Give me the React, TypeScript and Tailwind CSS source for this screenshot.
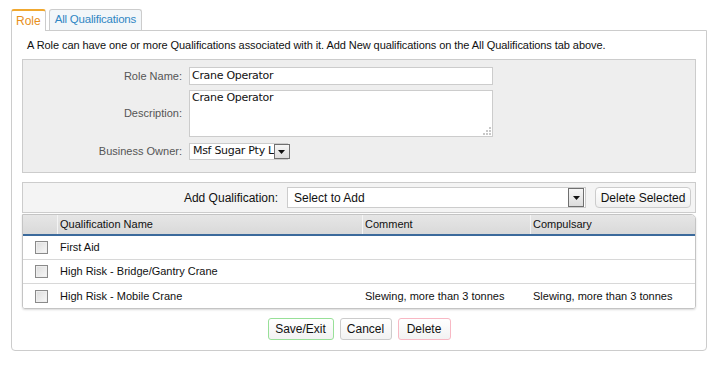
import { useState } from 'react'

const rows = [
  { name: 'First Aid', comment: '', compulsary: '' },
  { name: 'High Risk - Bridge/Gantry Crane', comment: '', compulsary: '' },
  {
    name: 'High Risk - Mobile Crane',
    comment: 'Slewing, more than 3 tonnes',
    compulsary: 'Slewing, more than 3 tonnes',
  },
]

function ArrowButton({ className = '' }: { className?: string }) {
  return (
    <span
      className={`flex items-center justify-center border border-[#6f6f6f] bg-gradient-to-b from-[#f6f6f6] to-[#dcdcdc] ${className}`}
    >
      <svg width="7" height="4" viewBox="0 0 7 4">
        <path d="M0 0h7L3.5 4z" fill="#111" />
      </svg>
    </span>
  )
}

export default function App() {
  const [checked, setChecked] = useState<boolean[]>([false, false, false])

  return (
    <div className="h-[366px] w-[721px] bg-white pl-[11px] pr-[14px] pt-[8px] font-['Liberation_Sans',Arial,sans-serif] text-[11px] text-[#111]">
      {/* tabs */}
      <div className="flex h-[22px] items-end gap-[3px]">
        <div className="relative z-10 -mb-px flex h-[22px] items-center rounded-t-[3px] border border-b-0 border-[#ccc] border-t-2 border-t-[#f0a830] bg-white px-[4px] text-[12px] text-[#e8901a]">
          Role
        </div>
        <div className="flex h-[21px] items-center rounded-t-[3px] border border-b-0 border-[#ccc] bg-[#f2f6f9] px-[5px] text-[11.5px] tracking-[-0.2px] text-[#2f86c4]">
          All Qualifications
        </div>
      </div>

      {/* main panel */}
      <div className="flex h-[321px] flex-col rounded-b-[4px] border border-[#ccc] px-[10px] pt-[7px]">
        <p className="pl-[5px] text-[11px] leading-[14px] tracking-[-0.07px]">
          A Role can have one or more Qualifications associated with it. Add New qualifications on the All Qualifications tab above.
        </p>

        {/* form box */}
        <div className="mt-[7px] h-[114px] border border-[#ccc] bg-[#eeeeee] pt-[7px]">
          <div className="flex items-center">
            <span className="w-[166px] pr-[7px] text-right text-[#555]">Role Name:</span>
            <div className="flex h-[18px] w-[304px] items-center border border-[#ccc] bg-white px-[2px] font-['DejaVu_Sans',sans-serif] text-[11px] tracking-[-0.3px]">
              Crane Operator
            </div>
          </div>
          <div className="mt-[5px] flex items-center">
            <span className="w-[166px] pr-[7px] text-right text-[#555]">Description:</span>
            <div className="relative h-[47px] w-[304px] border border-[#ccc] bg-white px-[2px] font-['DejaVu_Sans',sans-serif] text-[11px] leading-[14px] tracking-[-0.3px]">
              Crane Operator
              <svg className="absolute bottom-[1px] right-[1px]" width="9" height="9" viewBox="0 0 9 9">
                <g fill="#c8c8c8">
                  <rect x="7" y="1" width="2" height="2" />
                  <rect x="4" y="4" width="2" height="2" />
                  <rect x="7" y="4" width="2" height="2" />
                  <rect x="1" y="7" width="2" height="2" />
                  <rect x="4" y="7" width="2" height="2" />
                  <rect x="7" y="7" width="2" height="2" />
                </g>
              </svg>
            </div>
          </div>
          <div className="mt-[6px] flex items-center">
            <span className="w-[166px] pr-[7px] text-right text-[#555]">Business Owner:</span>
            <div className="flex h-[17px] w-[99px] items-center border border-[#ccc] bg-white pl-[3px] font-['DejaVu_Sans',sans-serif] text-[11px] tracking-[-0.3px]">
              <span className="flex-1 whitespace-nowrap">Msf Sugar Pty L</span>
              <ArrowButton className="h-[15px] w-[16px] shrink-0" />
            </div>
          </div>
        </div>

        {/* toolbar */}
        <div className="mt-[9px] flex h-[31px] items-center border border-[#ccc] bg-[#f4f4f4]">
          <span className="ml-auto pr-[9px] text-[12px]">Add Qualification:</span>
          <div className="flex h-[21px] w-[299px] items-center border border-[#ccc] bg-white pl-[6px] text-[12px]">
            <span className="flex-1">Select to Add</span>
            <ArrowButton className="mr-[1px] h-[19px] w-[16px]" />
          </div>
          <button className="ml-[9px] mr-[4px] h-[21px] w-[96px] rounded-[4px] border border-[#ccc] bg-gradient-to-b from-white to-[#f0f0f0] text-[12px]">
            Delete Selected
          </button>
        </div>

        {/* grid */}
        <div className="mt-[1px] overflow-hidden rounded-tr-[5px] rounded-b-[3px] border border-[#c4c4c4] shadow-[0_1px_2px_rgba(0,0,0,0.15)]">
          <div className="flex h-[21px] items-stretch border-b-2 border-[#3b6a9c] bg-gradient-to-b from-[#e6e6e6] to-[#d9d9d9] text-[11px]">
            <div className="w-[35px] border-r border-[#f4f4f4]" />
            <div className="flex w-[305px] items-center border-r border-[#f4f4f4] pl-[2px]">Qualification Name</div>
            <div className="flex w-[168px] items-center border-r border-[#f4f4f4] pl-[2px]">Comment</div>
            <div className="flex flex-1 items-center pl-[2px]">Compulsary</div>
          </div>
          {rows.map((r, i) => (
            <div
              key={r.name}
              className={`flex h-[24px] items-center bg-white ${i < rows.length - 1 ? 'border-b border-[#d8d8d8]' : ''}`}
            >
              <div className="flex w-[35px] justify-center pl-[2px]">
                <button
                  onClick={() => setChecked((c) => c.map((v, j) => (j === i ? !v : v)))}
                  className="h-[13px] w-[13px] border border-[#8a8a8a] bg-gradient-to-br from-[#dcdcdc] to-[#f8f8f8] shadow-[inset_0_0_0_1px_#eee]"
                >
                  {checked[i] && (
                    <svg width="11" height="11" viewBox="0 0 11 11">
                      <path d="M2 5.5l2.5 2.5L9 3" stroke="#222" strokeWidth="1.6" fill="none" />
                    </svg>
                  )}
                </button>
              </div>
              <div className="w-[305px] pl-[2px]">{r.name}</div>
              <div className="w-[168px] pl-[2px]">{r.comment}</div>
              <div className="flex-1 pl-[2px]">{r.compulsary}</div>
            </div>
          ))}
        </div>

        {/* actions */}
        <div className="mt-[9px] flex justify-center gap-[6px]">
          <button className="h-[22px] w-[66px] rounded-[3px] border border-[#98e098] bg-gradient-to-b from-white to-[#f2f2f2] text-[12px]">
            Save/Exit
          </button>
          <button className="h-[22px] w-[52px] rounded-[3px] border border-[#ccc] bg-gradient-to-b from-white to-[#f2f2f2] text-[12px]">
            Cancel
          </button>
          <button className="h-[22px] w-[53px] rounded-[3px] border border-[#f8b8c4] bg-gradient-to-b from-white to-[#f2f2f2] text-[12px]">
            Delete
          </button>
        </div>
      </div>
    </div>
  )
}
